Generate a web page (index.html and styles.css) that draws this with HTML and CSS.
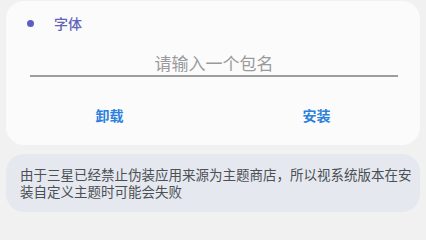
FILE: index.html
```html
<!DOCTYPE html>
<html lang="zh-CN">
<head>
<meta charset="utf-8">
<title>字体</title>
<link rel="stylesheet" href="styles.css">
</head>
<body>
<main class="page">
  <section class="card">
    <div class="card-header">
      <span class="dot"></span>
      <span class="title">字体</span>
    </div>
    <div class="field">
      <span class="placeholder">请输入一个包名</span>
    </div>
    <div class="actions">
      <button class="action">卸载</button>
      <button class="action">安装</button>
    </div>
  </section>
  <section class="notice">
    <p class="notice-text">由于三星已经禁止伪装应用来源为主题商店，所以视系统版本在安装自定义主题时可能会失败</p>
  </section>
</main>
</body>
</html>
```

FILE: styles.css
```css
* { box-sizing: border-box; }
html, body {
  margin: 0;
  padding: 0;
  background: #f1f1f2;
  font-family: "Noto Sans CJK SC", "Noto Sans", sans-serif;
}
.page {
  display: flex;
  flex-direction: column;
  gap: 9px;
  padding: 1px 6px 0 6px;
  width: 426px;
}
.card {
  background: #fbfbfc;
  border-radius: 18px;
  padding: 12px 0 10px 0;
  display: flex;
  flex-direction: column;
}
.card-header {
  display: flex;
  align-items: center;
  height: 20px;
  padding-left: 21px;
}
.dot {
  width: 7px;
  height: 7px;
  border-radius: 50%;
  background: #5b5ec6;
  flex: none;
}
.title {
  margin-left: 20px;
  font-size: 14px;
  font-weight: 500;
  line-height: 20px;
  color: #6164b8;
}
.field {
  margin: 18px 22px 0 24px;
  height: 26px;
  border-bottom: 2px solid #9d9d9d;
  display: flex;
  align-items: center;
  justify-content: center;
}
.placeholder {
  font-size: 17px;
  line-height: 24px;
  color: #9a9a9a;
}
.actions {
  margin-top: 18px;
  display: flex;
  height: 40px;
}
.action {
  flex: 1;
  border: none;
  background: transparent;
  font-family: inherit;
  font-size: 14px;
  font-weight: 700;
  color: #2b80dc;
  padding: 0;
}
.notice {
  background: #e5e9ef;
  border-radius: 18px;
  padding: 12px 8px 12px 14px;
}
.notice-text {
  margin: 0;
  font-size: 13.5px;
  line-height: 17px;
  color: #4c4f54;
}
```
